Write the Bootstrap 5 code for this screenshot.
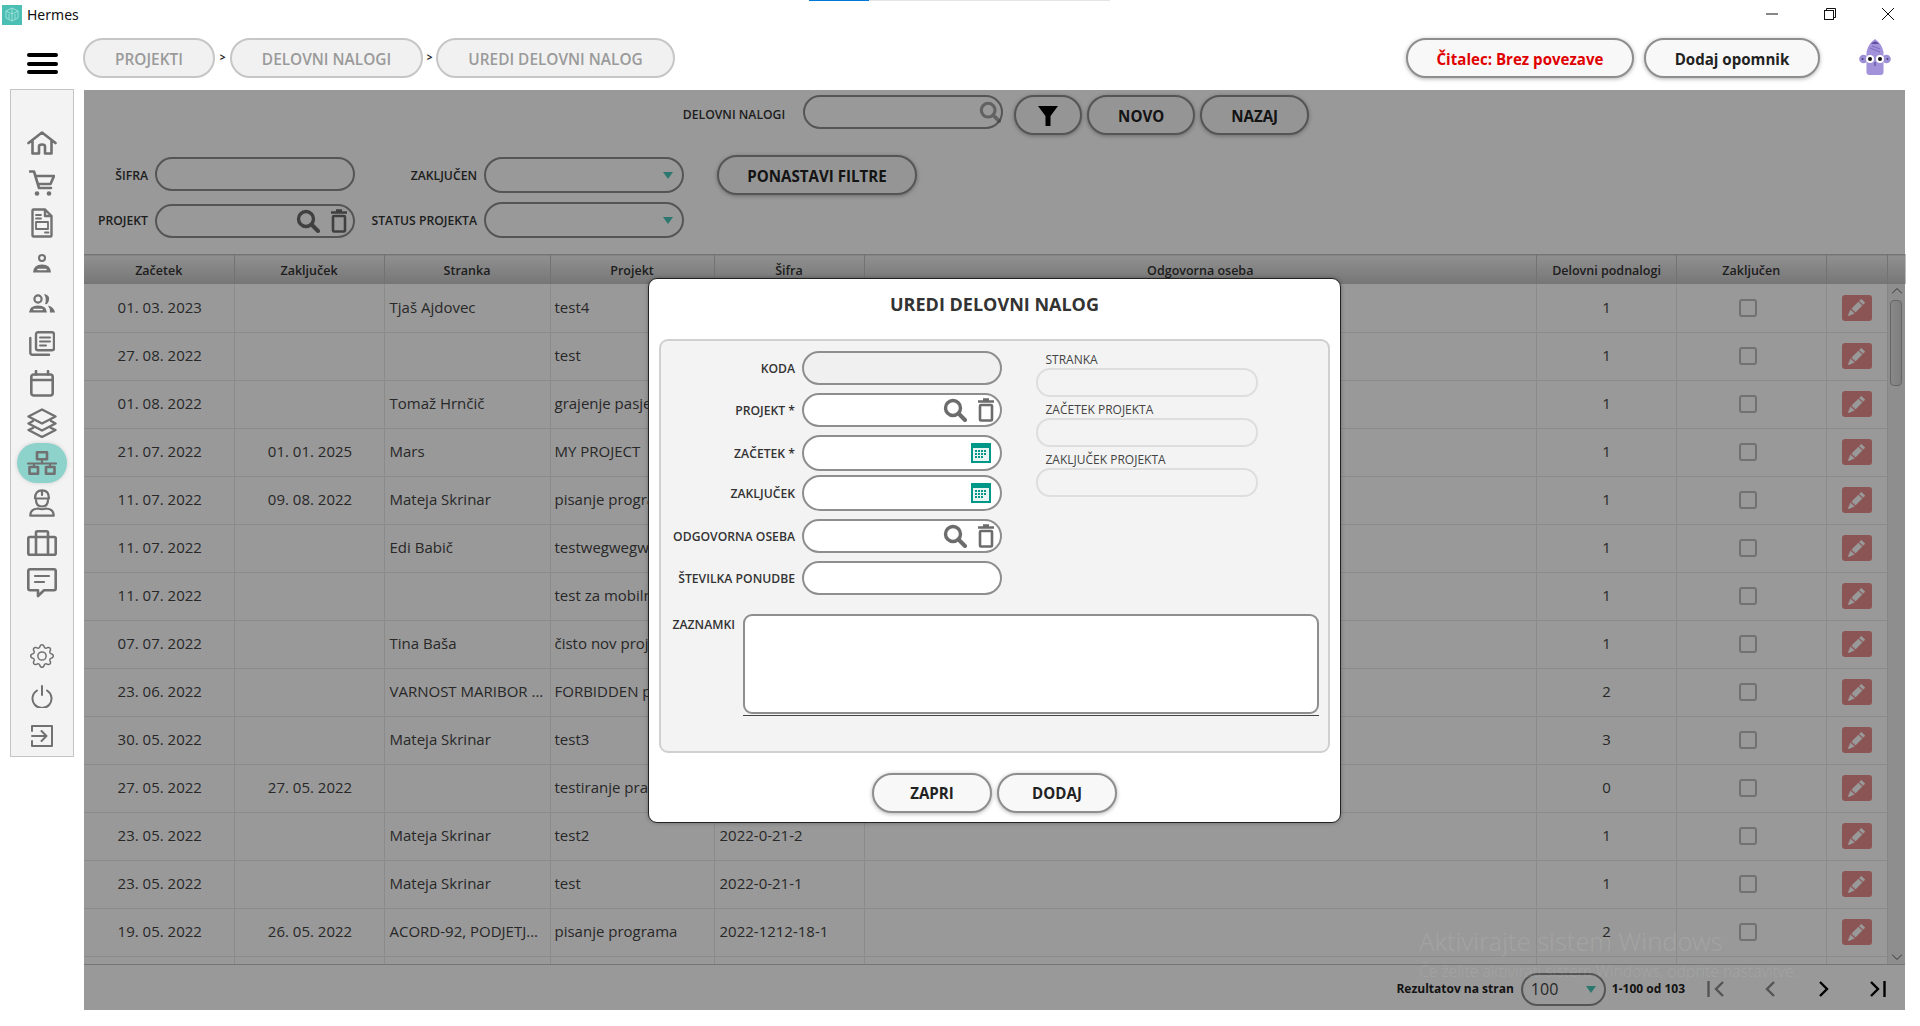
<!DOCTYPE html>
<html lang="sl">
<head>
<meta charset="utf-8">
<title>Hermes</title>
<link href="https://cdn.jsdelivr.net/npm/bootstrap@5.3.0/dist/css/bootstrap.min.css" rel="stylesheet">
<style>
html,body{height:100%;overflow:hidden;background:#fff}
body{font-family:"Open Sans","Noto Sans",sans-serif;color:#333;position:relative}
.win-strip{position:absolute;left:809px;top:0;width:301px;height:1px;background:#e4e4e4}
.win-strip span{display:block;width:60px;height:1px;background:#0078d7}
.title-bar{height:32px;padding-left:2px}
.app-logo{width:20px;height:20px;background:#4cbfb5;margin-top:-3px}
.app-name{font-size:14px;margin-left:5px;color:#111;font-family:"Noto Sans",sans-serif;margin-top:-4px}
.win-ctrls{margin-right:26px;gap:46px;margin-top:-5px}
.top-bar{height:58px;padding:6px 29px 14px 27px}
.burger{width:31px;margin-right:25px;padding-top:15px}
.burger span{display:block;height:4px;border-radius:2px;background:#000;margin-bottom:4.5px}
.crumb{height:40px;border:2px solid #c6c6c6;border-radius:20px;background:#f1f1f1;color:#9a9a9a;font-weight:600;font-size:15.4px;padding:4px 0 0;display:flex;align-items:center;justify-content:center}
.crumb-sep{font-size:10px;font-weight:700;width:15px;text-align:center;color:#222}
.crumb-sep.nar{width:13px}
.w-a{width:132px}.w-b{width:193px}.w-c{width:239px}
.pill-btn{height:40px;border:2px solid #8e8e8e;border-radius:20px;background:#f8f8f8;color:#222;font-weight:700;font-size:15.1px;padding:2px 0 0;display:flex;align-items:center;justify-content:center;box-shadow:0 1px 4px rgba(0,0,0,.3)}
.reader-btn{width:228px;color:#e00000;margin-right:10px}
.remind-btn{width:176px;margin-right:39px}
.content-wrap{height:920px}
.side-nav{width:64px;height:668px;margin:-1px 10px 0 10px;background:#f3f3f3;border:1px solid #c4c4c4;padding-top:33px}
.nav-slot{height:40px;width:100%;display:flex;align-items:center;justify-content:center}
.nav-slot svg{display:block}
.nav-slot.act{background:#8ed2cc;width:50px;border-radius:20px;margin:0 auto;box-shadow:0 0 4px rgba(0,0,0,.15)}
.nav-gap{height:33px}
.ico{fill:none;stroke:#717171;stroke-width:2.6;stroke-linecap:round;stroke-linejoin:round}
.ico-fill{fill:#717171;stroke:none}
.ico-thin{stroke-width:2}
.main-pane{width:1821px;height:920px;position:relative;background:#fff}
.head-row{height:60px;padding:5px 0 0 3px}
.lbl{font-size:12.2px;font-weight:600;color:#333;white-space:nowrap;text-align:right;padding-top:3px}
.lbl-head{line-height:40px;padding-top:0}
.field{border:2px solid #8e8e8e;border-radius:18px;background:#fff;display:flex;align-items:center;justify-content:flex-end;gap:10px;padding:0 5px}
.h34{height:34px}.h36{height:36px}
.w200{width:200px}
.head-field{width:200px;margin:0 11px 0 18px;padding-right:0}
.faint{opacity:.62}
.w-filter{width:68px}
.w-novo{width:108px;margin-left:5px}
.w-nazaj{width:109px;margin-left:5px}
.filter-wrap{height:104px}
.filter-rows{display:flex;flex-direction:column;gap:9px;padding-top:7px}
.filter-line{display:flex;height:36px}
.filter-line .lbl{align-self:center}
.filter-line.top{align-items:flex-start}
.filter-line.bot{align-items:flex-end}
.filter-line .l1{width:71px;padding-right:7px}
.filter-line .l2{width:129px;padding-right:7px}
.reset-btn{width:200px;margin:5px 0 0 33px}
.caret{width:0;height:0;border-left:5px solid transparent;border-right:5px solid transparent;border-top:7px solid #4bc8b7;margin-right:4px}
.gtbl{table-layout:fixed;width:100%;margin:0;--bs-table-bg:transparent;font-size:15px}
.gtbl.table>:not(caption)>*>*{padding:0 5px;border:0;border-right:1px solid #e8e8e8;border-bottom:1px solid #e8e8e8;box-shadow:none;color:#444;vertical-align:middle;white-space:nowrap;overflow:hidden}
.gtbl.table>thead>tr>th{height:29px;padding-top:4px;font-size:12.5px;font-weight:600;text-align:center;color:#333;background:linear-gradient(#f0f0f0,#c6c6c6);border-top:1px solid #c4c4c4;border-right-color:#bebebe;border-bottom-color:#c4c4c4}
.gtbl.table>tbody>tr>td{height:48px;padding-bottom:2px}
.gtbl.table>tbody>tr>td.tc{text-align:center}
.gtbl.table>tbody>tr>td:nth-child(-n+2){padding-left:7px}
.gtbl.table>tbody>tr>td:nth-child(4){padding-left:4px}
.c1{width:150px}.c3{width:166px}.c4{width:164px}.c6{width:672.5px}.c7{width:140px}.c8{width:149.5px}.c9{width:61px}.c10{width:18px}
.tbl-body{height:681px;overflow:hidden;border-bottom:1px solid #c4c4c4}
.tbl-left{width:1803px}
.sbar{width:18px;background:#ededed;position:relative;padding-top:16px;border-left:1px solid #e0e0e0}
.sthumb{width:12px;height:86px;margin-left:2px;border:1px solid #a9a9a9;border-radius:4px;background:linear-gradient(90deg,#e4e4e4,#d2d2d2)}
.sarrow{position:absolute;left:4px}
.sa-up{top:4px}.sa-dn{bottom:4px}
.chk{appearance:none;width:18px;height:18px;border:2px solid #bdbdbd;border-radius:3px;background:transparent;margin:0;display:block;position:relative;left:-3px}
.td-c{display:flex;justify-content:center;padding-top:2px}
.edit-btn{width:30px;height:26px;padding:0;border:0;border-radius:3px;background:#e98e8e;display:flex;align-items:center;justify-content:center}
.pager{height:44px;padding:4px 19px 0 0;font-size:12px;font-weight:700;color:#222}
.pager .sel{width:85px;height:33px;border:2px solid #8e8e8e;border-radius:17px;margin:0 6px 0 7px;display:flex;align-items:center;justify-content:space-between;padding-left:8px;font-size:16px;font-weight:400;color:#444}
.pager .sel .caret{margin-right:8px}
.pg-icons{margin-left:22px}
.pg-icons svg{display:block}
.pg-2{margin-left:40px}.pg-3{margin-left:44px}.pg-4{margin-left:41px}
.dim{position:absolute;inset:0;background:rgba(0,0,0,.4);display:flex;align-items:center;justify-content:center}
.dlg{width:693px;height:545px;background:#fff;border:1px solid #222;border-radius:9px;padding:0 10px;box-shadow:0 0 4px rgba(0,0,0,.3)}
.dlg-title{height:60px;padding-bottom:7px;font-size:18px;font-weight:700;color:#333;margin:0;display:flex;align-items:center;justify-content:center}
.dlg-panel{height:414px;background:#f3f3f3;border:2px solid #d0d0d0;border-radius:9px;padding:10px 0 0 1px}
.f-col{width:340px}
.f-row{display:flex;align-items:center;margin-bottom:8px}
.f-row.tight{margin-bottom:4px}
.f-row .lbl{width:139.5px;padding-right:6.5px}
.field.ro{background:#f0f0f0}
.r-col{margin-left:33.5px;width:222px}
.r-label{font-size:12px;color:#444;height:17px;line-height:17px;padding-left:10px;white-space:nowrap}
.r-input{height:29px;border:2px solid #dedede;border-radius:14px;margin-bottom:4px;background:#f3f3f3}
.notes{margin-top:19px;padding-left:10.5px}
.notes .lbl{width:70px;text-align:left;padding-top:2px}
.notes-box{width:576.5px;height:100px;border:2px solid #8e8e8e;border-radius:9px;background:#fff;resize:none;display:block;padding:0}
.notes-line{width:576px;height:1px;background:#444;margin-left:70px;margin-top:1px}
.dlg-foot{gap:5px;margin-top:20px}
.dlg-foot .pill-btn{width:120px}
.wm{position:absolute;left:1335px;top:836px;color:rgba(255,255,255,.11);pointer-events:none;white-space:nowrap;font-family:"Noto Sans",sans-serif;font-weight:300}
.wm-a{font-size:25.3px;line-height:30px}
.wm-b{font-size:15.6px;line-height:30px}
.mascot{flex-shrink:0}
</style>
</head>
<body>
<div class="win-strip"><span></span></div>
<svg width="0" height="0" class="position-absolute">
<defs>
<symbol id="s-search" viewBox="0 0 24 24"><circle cx="10" cy="10" r="7.5" fill="none" stroke="#6c6c6c" stroke-width="3.4"/><path d="M15.5 15.5 22 22" stroke="#6c6c6c" stroke-width="4" stroke-linecap="round"/></symbol>
<symbol id="s-trash" viewBox="0 0 18 24"><path d="M1 3.5h16M6 1.5h6" stroke="#6c6c6c" stroke-width="2.4" fill="none"/><rect x="3" y="7" width="12" height="15.5" rx="1" fill="none" stroke="#6c6c6c" stroke-width="2.6"/></symbol>
<symbol id="s-cal" viewBox="0 0 20 20"><rect width="20" height="20" fill="#009688"/><rect x="2" y="5" width="16" height="13" fill="#e8f5f3"/><g fill="#009688"><rect x="4" y="7" width="2" height="2"/><rect x="7" y="7" width="2" height="2"/><rect x="10" y="7" width="2" height="2"/><rect x="13" y="7" width="2" height="2"/><rect x="4" y="10" width="2" height="2"/><rect x="7" y="10" width="2" height="2"/><rect x="10" y="10" width="2" height="2"/><rect x="13" y="10" width="2" height="2"/><rect x="4" y="13" width="2" height="2"/><rect x="7" y="13" width="2" height="2"/><rect x="10" y="13" width="2" height="2"/></g></symbol>
<symbol id="s-pen" viewBox="0 0 16 16"><path fill="#fff" d="M12.854.146a.5.5 0 0 0-.707 0L10.5 1.793 14.207 5.5l1.647-1.646a.5.5 0 0 0 0-.708l-3-3zm.646 6.061L9.793 2.5 3.293 9H3.5a.5.5 0 0 1 .5.5v.5h.5a.5.5 0 0 1 .5.5v.5h.5a.5.5 0 0 1 .5.5v.5h.5a.5.5 0 0 1 .5.5v.207l6.5-6.5zm-7.468 7.468A.5.5 0 0 1 6 13.5V13h-.5a.5.5 0 0 1-.5-.5V12h-.5a.5.5 0 0 1-.5-.5V11h-.5a.5.5 0 0 1-.5-.5V10h-.5a.499.499 0 0 1-.175-.032l-.179.178a.5.5 0 0 0-.11.168l-2 5a.5.5 0 0 0 .65.65l5-2a.5.5 0 0 0 .168-.11l.178-.178z"/></symbol>
</defs>
</svg>

<div class="title-bar d-flex align-items-center">
  <div class="app-logo d-flex align-items-center justify-content-center">
    <svg width="14" height="15" viewBox="0 0 14 15" fill="none" stroke="#9fe0da" stroke-width="1"><path d="M7 1 13 4v7l-6 3-6-3V4zM7 1v13M1 4l6 3 6-3M4 7v5M10 7v5"/></svg>
  </div>
  <span class="app-name">Hermes</span>
  <div class="ms-auto d-flex align-items-center win-ctrls">
    <svg width="12" height="12" viewBox="0 0 12 12"><path d="M0 6h12" stroke="#111" stroke-width="1"/></svg>
    <svg width="12" height="12" viewBox="0 0 12 12" fill="none" stroke="#111"><rect x=".5" y="2.5" width="9" height="9"/><path d="M2.5 2.5v-2h9v9h-2"/></svg>
    <svg width="12" height="12" viewBox="0 0 12 12"><path d="M0 0l12 12M12 0 0 12" stroke="#111" stroke-width="1"/></svg>
  </div>
</div>

<div class="top-bar d-flex align-items-start">
  <div class="burger"><span></span><span></span><span></span></div>
  <button class="btn crumb w-a" type="button">PROJEKTI</button>
  <span class="crumb-sep align-self-center">&gt;</span>
  <button class="btn crumb w-b" type="button">DELOVNI NALOGI</button>
  <span class="crumb-sep nar align-self-center">&gt;</span>
  <button class="btn crumb w-c" type="button">UREDI DELOVNI NALOG</button>
  <button class="btn pill-btn reader-btn ms-auto" type="button">Čitalec: Brez povezave</button>
  <button class="btn pill-btn remind-btn" type="button">Dodaj opomnik</button>
  <svg width="32" height="38" viewBox="0 0 32 38" class="mascot">
    <circle cx="4.5" cy="21" r="4.300" fill="#9d8fd6"/><circle cx="27.5" cy="21" r="4.300" fill="#9d8fd6"/>
    <circle cx="3.500" cy="21" r="1" fill="#4a3f85"/><circle cx="28.500" cy="21" r="1" fill="#4a3f85"/>
    <path d="M7.500 14Q9 6 16 1q7 5 8.500 13v20q0 3-3 3H10.500q-3 0-3-3z" fill="#a192da"/>
    <path d="M12 6q4-5 8 0z" fill="#5e4ea5"/>
    <path d="M11 10l10 4M13 8l8 3" stroke="#7c6cc0" stroke-width="1" fill="none"/>
    <circle cx="11" cy="21" r="4" fill="#fff"/><circle cx="21" cy="21" r="4" fill="#fff"/>
    <circle cx="11" cy="21" r="2" fill="#111"/><circle cx="21" cy="21" r="2" fill="#111"/>
    <path d="M16 24v4" stroke="#4a3f85" stroke-width="1"/>
  </svg>
</div>

<div class="content-wrap d-flex align-items-start">
  <nav class="side-nav flex-shrink-0">
    <div class="nav-slot"><svg width="30" height="24" viewBox="0 0 30 24" class="ico"><path d="M1.5 12 15 1.5 28.500 12M5.500 9.500V22.500H12V15.500Q12 13.500 15 13.500T18 15.500V22.500H24.500V9.500"/></svg></div>
    <div class="nav-slot"><svg width="26" height="26" viewBox="0 0 26 26" class="ico"><path d="M1 1.500H5L10 18H22M6.500 6H25L21.500 14H9"/><circle class="ico-fill" cx="8" cy="23.500" r="2.300"/><circle class="ico-fill" cx="20" cy="23.500" r="2.300"/></svg></div>
    <div class="nav-slot"><svg width="22" height="30" viewBox="0 0 22 30" class="ico"><path d="M2.500 1.500H14L20.500 8V27.500Q20.500 28.500 19.500 28.500H2.500Q1.500 28.500 1.500 27.500V2.500Q1.500 1.500 2.500 1.500ZM14 1.500V8H20.500" stroke-width="2.4"/><path d="M5 7H10M5 10.500H10M14 24.500H17.500" stroke-width="1.800"/><rect x="5" y="14" width="12" height="7" stroke-width="1.800"/></svg></div>
    <div class="nav-slot"><svg width="18" height="19" viewBox="0 0 18 19"><circle cx="9" cy="4" r="3" fill="none" stroke="#717171" stroke-width="2"/><path class="ico-fill" d="M0 18.500Q.5 10.500 9 10.500T18 18.500Z"/><path d="M5 15.500H13" stroke="#f3f3f3" stroke-width="1.600" stroke-linecap="round"/></svg></div>
    <div class="nav-slot"><svg width="26" height="19" viewBox="0 0 26 19"><circle cx="9" cy="5" r="3.600" fill="none" stroke="#717171" stroke-width="2.200"/><path class="ico-fill" d="M0 18.500Q.5 11.500 9 11.500T18 18.500Z"/><path class="ico-fill" d="M15 0Q21 1 20 6T16 10Q18 5 15 0ZM19 11.500Q25 13 26 18.500H21Q21 14 19 11.500Z"/><path d="M5 15.500H13" stroke="#f3f3f3" stroke-width="1.600" stroke-linecap="round"/></svg></div>
    <div class="nav-slot"><svg width="26" height="25" viewBox="0 0 26 25" class="ico"><rect x="7" y="1.300" width="18" height="18" rx="2" stroke-width="2.400"/><path d="M1.300 7V21.500Q1.300 23.700 3.500 23.700H20" stroke-width="2.400"/><path d="M11 6.500H21M11 10.500H21M11 14.500H17" stroke-width="2"/></svg></div>
    <div class="nav-slot"><svg width="24" height="27" viewBox="0 0 24 27" class="ico"><rect x="1.300" y="4.500" width="21.400" height="21" rx="2.500"/><path d="M1.300 10H22.700M6 1V4.500M18 1V4.500"/></svg></div>
    <div class="nav-slot"><svg width="30" height="30" viewBox="0 0 30 30" class="ico"><path d="M15 1.500 28.500 8.500 15 15.500 1.500 8.500Z" stroke-width="2.400"/><path d="M6 13 1.500 15.500 15 22.500 28.500 15.500 24 13M6 20 1.500 22 15 29 28.500 22 24 20" stroke-width="2.400"/></svg></div>
    <div class="nav-slot act"><svg width="30" height="24" viewBox="0 0 30 24" class="ico"><rect x="10" y="1.300" width="10" height="7"/><path d="M15 8.500V12.500M1 12.500H29M7 12.500V16M23 12.500V16" stroke-width="2.200"/><rect x="2.500" y="16" width="8.500" height="6.700"/><rect x="19" y="16" width="8.500" height="6.700"/></svg></div>
    <div class="nav-slot"><svg width="26" height="28" viewBox="0 0 26 28" class="ico"><path d="M6 9.500Q6 1.300 13 1.300T20 9.500ZM13 1.300V6" stroke-width="2.200"/><path d="M7 11Q7 17.500 13 17.500T19 11" stroke-width="2.200"/><path d="M1.300 26.700Q1.300 20 9 19.500Q13 21 17 19.500Q24.700 20 24.700 26.700Z" stroke-width="2.200"/></svg></div>
    <div class="nav-slot"><svg width="30" height="26" viewBox="0 0 30 26" class="ico"><rect x="1.300" y="7" width="27.400" height="17.700" rx="1.500"/><path d="M9 7V2.500Q9 1.300 10.500 1.300H19.500Q21 1.300 21 2.500V7M9 7V24.700M21 7V24.700"/></svg></div>
    <div class="nav-slot"><svg width="30" height="30" viewBox="0 0 30 30" class="ico"><path d="M3 1.300H27Q28.700 1.300 28.700 3V20.500Q28.700 22.200 27 22.200H17L11 28V22.200H3Q1.300 22.200 1.300 20.500V3Q1.300 1.300 3 1.300Z"/><path d="M8 8H22M8 14H17" stroke-width="2.200"/></svg></div>
    <div class="nav-gap"></div>
    <div class="nav-slot"><svg width="24" height="24" viewBox="0 0 16 16"><g fill="#717171"><path d="M8 4.754a3.246 3.246 0 1 0 0 6.492 3.246 3.246 0 0 0 0-6.492zM5.754 8a2.246 2.246 0 1 1 4.492 0 2.246 2.246 0 0 1-4.492 0z"/><path d="M9.796 1.343c-.527-1.790-3.065-1.790-3.592 0l-.094.319a.873.873 0 0 1-1.255.52l-.292-.16c-1.640-.892-3.433.902-2.540 2.541l.159.292a.873.873 0 0 1-.52 1.255l-.319.094c-1.790.527-1.790 3.065 0 3.592l.319.094a.873.873 0 0 1 .52 1.255l-.16.292c-.892 1.640.901 3.434 2.541 2.540l.292-.159a.873.873 0 0 1 1.255.52l.094.319c.527 1.790 3.065 1.790 3.592 0l.094-.319a.873.873 0 0 1 1.255-.52l.292.16c1.640.893 3.434-.902 2.540-2.541l-.159-.292a.873.873 0 0 1 .52-1.255l.319-.094c1.790-.527 1.790-3.065 0-3.592l-.319-.094a.873.873 0 0 1-.52-1.255l.16-.292c.893-1.640-.902-3.433-2.541-2.540l-.292.159a.873.873 0 0 1-1.255-.52l-.094-.319zm-2.633.283c.246-.835 1.428-.835 1.674 0l.094.319a1.873 1.873 0 0 0 2.693 1.115l.291-.16c.764-.415 1.600.42 1.184 1.185l-.159.292a1.873 1.873 0 0 0 1.116 2.692l.318.094c.835.246.835 1.428 0 1.674l-.319.094a1.873 1.873 0 0 0-1.115 2.693l.16.291c.415.764-.42 1.600-1.185 1.184l-.291-.159a1.873 1.873 0 0 0-2.693 1.116l-.094.318c-.246.835-1.428.835-1.674 0l-.094-.319a1.873 1.873 0 0 0-2.692-1.115l-.292.16c-.764.415-1.600-.42-1.184-1.185l.159-.291A1.873 1.873 0 0 0 1.945 8.930l-.319-.094c-.835-.246-.835-1.428 0-1.674l.319-.094A1.873 1.873 0 0 0 3.060 4.377l-.16-.292c-.415-.764.42-1.600 1.185-1.184l.292.159a1.873 1.873 0 0 0 2.692-1.115l.094-.319z"/></g></svg></div>
    <div class="nav-slot"><svg width="22" height="23" viewBox="0 0 22 23" class="ico ico-thin"><path d="M6 5.500A9.500 9.500 0 1 0 16 5.500M11 1V10"/></svg></div>
    <div class="nav-slot"><svg width="22" height="22" viewBox="0 0 22 22" class="ico ico-thin"><path d="M1 6V1H21V21H1V16M1 11H15M10.500 6 15.500 11 10.500 16"/></svg></div>
  </nav>

  <main class="main-pane flex-shrink-0">
    <div class="head-row d-flex justify-content-center align-items-start">
      <span class="lbl lbl-head">DELOVNI NALOGI</span>
      <div class="field h34 head-field"><svg width="22" height="22" class="faint"><use href="#s-search"/></svg></div>
      <button class="btn pill-btn w-filter" type="button"><svg width="20" height="22" viewBox="0 0 20 22"><path d="M0 1H20L12.500 11V21H7.500V11Z" fill="#000"/></svg></button>
      <button class="btn pill-btn w-novo" type="button">NOVO</button>
      <button class="btn pill-btn w-nazaj" type="button">NAZAJ</button>
    </div>

    <div class="d-flex align-items-start filter-wrap">
      <div class="filter-rows">
        <div class="filter-line top"><span class="lbl l1">ŠIFRA</span><div class="field h34 w200"></div><span class="lbl l2">ZAKLJUČEN</span><div class="field h36 w200"><span class="caret"></span></div></div>
        <div class="filter-line bot"><span class="lbl l1">PROJEKT</span><div class="field h34 w200"><svg width="24" height="24"><use href="#s-search"/></svg><svg width="18" height="24"><use href="#s-trash"/></svg></div><span class="lbl l2">STATUS PROJEKTA</span><div class="field h36 w200"><span class="caret"></span></div></div>
      </div>
      <button class="btn pill-btn reset-btn" type="button">PONASTAVI FILTRE</button>
    </div>

    <table class="table gtbl">
      <colgroup><col class="c1"><col class="c1"><col class="c3"><col class="c4"><col class="c1"><col class="c6"><col class="c7"><col class="c8"><col class="c9"><col class="c10"></colgroup>
      <thead><tr><th>Začetek</th><th>Zaključek</th><th>Stranka</th><th>Projekt</th><th>Šifra</th><th>Odgovorna oseba</th><th>Delovni podnalogi</th><th>Zaključen</th><th></th><th></th></tr></thead>
    </table>
    <div class="tbl-body d-flex">
      <div class="tbl-left">
      <table class="table gtbl">
        <colgroup><col class="c1"><col class="c1"><col class="c3"><col class="c4"><col class="c1"><col class="c6"><col class="c7"><col class="c8"><col class="c9"></colgroup>
        <tbody>
        <tr><td class="tc">01. 03. 2023</td><td class="tc"></td><td>Tjaš Ajdovec</td><td>test4</td><td></td><td></td><td class="tc">1</td><td><div class="td-c"><input class="chk" type="checkbox"></div></td><td><div class="td-c"><button class="btn edit-btn" type="button"><svg width="17" height="17"><use href="#s-pen"/></svg></button></div></td></tr>
        <tr><td class="tc">27. 08. 2022</td><td class="tc"></td><td></td><td>test</td><td></td><td></td><td class="tc">1</td><td><div class="td-c"><input class="chk" type="checkbox"></div></td><td><div class="td-c"><button class="btn edit-btn" type="button"><svg width="17" height="17"><use href="#s-pen"/></svg></button></div></td></tr>
        <tr><td class="tc">01. 08. 2022</td><td class="tc"></td><td>Tomaž Hrnčič</td><td>grajenje pasje ute</td><td></td><td></td><td class="tc">1</td><td><div class="td-c"><input class="chk" type="checkbox"></div></td><td><div class="td-c"><button class="btn edit-btn" type="button"><svg width="17" height="17"><use href="#s-pen"/></svg></button></div></td></tr>
        <tr><td class="tc">21. 07. 2022</td><td class="tc">01. 01. 2025</td><td>Mars</td><td>MY PROJECT</td><td></td><td></td><td class="tc">1</td><td><div class="td-c"><input class="chk" type="checkbox"></div></td><td><div class="td-c"><button class="btn edit-btn" type="button"><svg width="17" height="17"><use href="#s-pen"/></svg></button></div></td></tr>
        <tr><td class="tc">11. 07. 2022</td><td class="tc">09. 08. 2022</td><td>Mateja Skrinar</td><td>pisanje programa</td><td></td><td></td><td class="tc">1</td><td><div class="td-c"><input class="chk" type="checkbox"></div></td><td><div class="td-c"><button class="btn edit-btn" type="button"><svg width="17" height="17"><use href="#s-pen"/></svg></button></div></td></tr>
        <tr><td class="tc">11. 07. 2022</td><td class="tc"></td><td>Edi Babič</td><td>testwegwegweg</td><td></td><td></td><td class="tc">1</td><td><div class="td-c"><input class="chk" type="checkbox"></div></td><td><div class="td-c"><button class="btn edit-btn" type="button"><svg width="17" height="17"><use href="#s-pen"/></svg></button></div></td></tr>
        <tr><td class="tc">11. 07. 2022</td><td class="tc"></td><td></td><td>test za mobilni</td><td></td><td></td><td class="tc">1</td><td><div class="td-c"><input class="chk" type="checkbox"></div></td><td><div class="td-c"><button class="btn edit-btn" type="button"><svg width="17" height="17"><use href="#s-pen"/></svg></button></div></td></tr>
        <tr><td class="tc">07. 07. 2022</td><td class="tc"></td><td>Tina Baša</td><td>čisto nov projekt</td><td></td><td></td><td class="tc">1</td><td><div class="td-c"><input class="chk" type="checkbox"></div></td><td><div class="td-c"><button class="btn edit-btn" type="button"><svg width="17" height="17"><use href="#s-pen"/></svg></button></div></td></tr>
        <tr><td class="tc">23. 06. 2022</td><td class="tc"></td><td>VARNOST MARIBOR ...</td><td>FORBIDDEN project</td><td></td><td></td><td class="tc">2</td><td><div class="td-c"><input class="chk" type="checkbox"></div></td><td><div class="td-c"><button class="btn edit-btn" type="button"><svg width="17" height="17"><use href="#s-pen"/></svg></button></div></td></tr>
        <tr><td class="tc">30. 05. 2022</td><td class="tc"></td><td>Mateja Skrinar</td><td>test3</td><td></td><td></td><td class="tc">3</td><td><div class="td-c"><input class="chk" type="checkbox"></div></td><td><div class="td-c"><button class="btn edit-btn" type="button"><svg width="17" height="17"><use href="#s-pen"/></svg></button></div></td></tr>
        <tr><td class="tc">27. 05. 2022</td><td class="tc">27. 05. 2022</td><td></td><td>testiranje prace</td><td></td><td></td><td class="tc">0</td><td><div class="td-c"><input class="chk" type="checkbox"></div></td><td><div class="td-c"><button class="btn edit-btn" type="button"><svg width="17" height="17"><use href="#s-pen"/></svg></button></div></td></tr>
        <tr><td class="tc">23. 05. 2022</td><td class="tc"></td><td>Mateja Skrinar</td><td>test2</td><td>2022-0-21-2</td><td></td><td class="tc">1</td><td><div class="td-c"><input class="chk" type="checkbox"></div></td><td><div class="td-c"><button class="btn edit-btn" type="button"><svg width="17" height="17"><use href="#s-pen"/></svg></button></div></td></tr>
        <tr><td class="tc">23. 05. 2022</td><td class="tc"></td><td>Mateja Skrinar</td><td>test</td><td>2022-0-21-1</td><td></td><td class="tc">1</td><td><div class="td-c"><input class="chk" type="checkbox"></div></td><td><div class="td-c"><button class="btn edit-btn" type="button"><svg width="17" height="17"><use href="#s-pen"/></svg></button></div></td></tr>
        <tr><td class="tc">19. 05. 2022</td><td class="tc">26. 05. 2022</td><td>ACORD-92, PODJETJ...</td><td>pisanje programa</td><td>2022-1212-18-1</td><td></td><td class="tc">2</td><td><div class="td-c"><input class="chk" type="checkbox"></div></td><td><div class="td-c"><button class="btn edit-btn" type="button"><svg width="17" height="17"><use href="#s-pen"/></svg></button></div></td></tr>
        <tr><td></td><td></td><td></td><td></td><td></td><td></td><td></td><td></td><td></td></tr>
        </tbody>
      </table>
      </div>
      <div class="sbar">
        <svg class="sarrow sa-up" width="10" height="6" viewBox="0 0 10 6"><path d="M0 5.500 5 .5l5 5" fill="none" stroke="#555"/></svg>
        <div class="sthumb"></div>
        <svg class="sarrow sa-dn" width="10" height="6" viewBox="0 0 10 6"><path d="M0 .5l5 5 5-5" fill="none" stroke="#555"/></svg>
      </div>
    </div>
    <div class="pager d-flex align-items-center justify-content-end">
      <span>Rezultatov na stran</span>
      <div class="sel"><span>100</span><span class="caret"></span></div>
      <span>1-100 od 103</span>
      <div class="pg-icons d-flex align-items-center">
        <svg width="18" height="16" viewBox="0 0 18 16" fill="none" stroke="#8c8c8c" stroke-width="2.400"><path d="M1.500 0V16M16 1 9 8l7 7"/></svg>
        <svg class="pg-2" width="10" height="16" viewBox="0 0 10 16" fill="none" stroke="#8c8c8c" stroke-width="2.400"><path d="M9 1 2 8l7 7"/></svg>
        <svg class="pg-3" width="10" height="16" viewBox="0 0 10 16" fill="none" stroke="#000" stroke-width="2.400"><path d="M1 1l7 7-7 7"/></svg>
        <svg class="pg-4" width="16" height="16" viewBox="0 0 16 16" fill="none" stroke="#000" stroke-width="2.400"><path d="M1 1l7 7-7 7M14.500 0V16"/></svg>
      </div>
    </div>

    <div class="dim">
      <div class="dlg" role="dialog">
        <h5 class="dlg-title">UREDI DELOVNI NALOG</h5>
        <div class="dlg-panel">
          <div class="d-flex">
            <div class="f-col">
              <div class="f-row"><span class="lbl">KODA</span><div class="field h34 w200 ro"></div></div>
              <div class="f-row"><span class="lbl">PROJEKT *</span><div class="field h34 w200"><svg width="24" height="24"><use href="#s-search"/></svg><svg width="18" height="24"><use href="#s-trash"/></svg></div></div>
              <div class="f-row tight"><span class="lbl">ZAČETEK *</span><div class="field h36 w200"><svg width="20" height="20" class="me-1"><use href="#s-cal"/></svg></div></div>
              <div class="f-row"><span class="lbl">ZAKLJUČEK</span><div class="field h36 w200"><svg width="20" height="20" class="me-1"><use href="#s-cal"/></svg></div></div>
              <div class="f-row"><span class="lbl">ODGOVORNA OSEBA</span><div class="field h34 w200"><svg width="24" height="24"><use href="#s-search"/></svg><svg width="18" height="24"><use href="#s-trash"/></svg></div></div>
              <div class="f-row mb-0"><span class="lbl">ŠTEVILKA PONUDBE</span><div class="field h34 w200"></div></div>
            </div>
            <div class="r-col">
              <div class="r-label">STRANKA</div><div class="r-input"></div>
              <div class="r-label">ZAČETEK PROJEKTA</div><div class="r-input"></div>
              <div class="r-label">ZAKLJUČEK PROJEKTA</div><div class="r-input"></div>
            </div>
          </div>
          <div class="notes">
            <div class="d-flex"><span class="lbl">ZAZNAMKI</span><textarea class="notes-box" aria-label="Zaznamki"></textarea></div>
            <div class="notes-line"></div>
          </div>
        </div>
        <div class="dlg-foot d-flex justify-content-center">
          <button class="btn pill-btn" type="button">ZAPRI</button>
          <button class="btn pill-btn" type="button">DODAJ</button>
        </div>
      </div>
    </div>
    <div class="wm"><div class="wm-a">Aktivirajte sistem Windows</div><div class="wm-b">Če želite aktivirati sistem Windows, odprite nastavitve.</div></div>
  </main>
</div>
<script src="https://cdn.jsdelivr.net/npm/bootstrap@5.3.0/dist/js/bootstrap.bundle.min.js"></script>
</body>
</html>
